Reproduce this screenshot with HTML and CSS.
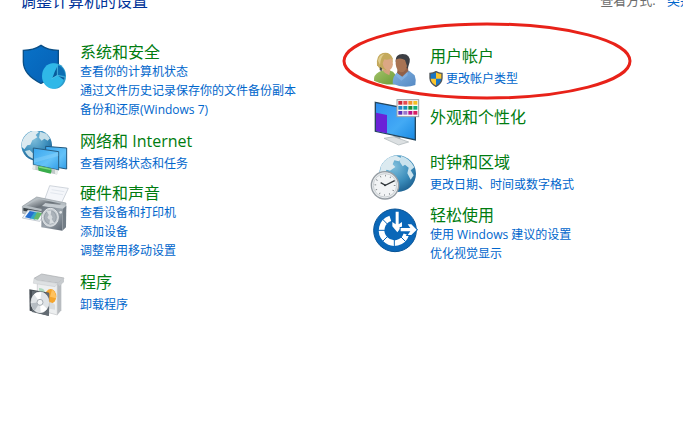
FILE: index.html
```
<!DOCTYPE html>
<html lang="zh-CN">
<head>
  <meta charset="UTF-8">
  <meta name="viewport" content="width=device-width, initial-scale=1.0">
  <title>控制面板</title>
  <link rel="stylesheet" href="styles.css">
</head>
<body>
  <header class="top-bar">
    <h1>调整计算机的设置</h1>
    <div class="view-by">查看方式: <a href="#">类别</a></div>
  </header>

  <main class="categories">
    <div class="column">
      <section class="category multi">
        <svg class="icon" viewBox="15 6 150 144" aria-hidden="true">
          <defs>
            <linearGradient id="shield-blue" x1="0" y1="0" x2="1" y2="1">
              <stop offset="0" stop-color="#0872c8"/>
              <stop offset="1" stop-color="#0660b4"/>
            </linearGradient>
          </defs>
          <path d="M25 31Q56 31 78 16Q99 31 130 31V72Q128 108 78 130Q26 105 25 66Z" fill="url(#shield-blue)" stroke="#0b4f86" stroke-width="4"/>
          <ellipse cx="120" cy="108" rx="33" ry="38" fill="#2d9ccc"/>
          <ellipse cx="114" cy="108" rx="33" ry="38" fill="#2fb8e8"/>
          <path d="M127 106V74Q150 82 151 108Z" fill="#0b6fb4"/>
          <path d="M127 106L112 115Q119 94 127 79ZM127 106L150 110L146 119Z" fill="#075b9c"/>
          <path d="M127 74V106L151 112M127 106L110 116" fill="none" stroke="#62cff0" stroke-width="2"/>
        </svg>
        <div class="text">
          <h2><a href="#">系统和安全</a></h2>
          <ul>
            <li><a href="#">查看你的计算机状态</a></li>
            <li><a href="#">通过文件历史记录保存你的文件备份副本</a></li>
            <li><a href="#">备份和还原(Windows 7)</a></li>
          </ul>
        </div>
      </section>

      <section class="category">
        <svg class="icon" viewBox="15 15 150 144" aria-hidden="true">
          <defs>
            <radialGradient id="globe" cx=".4" cy=".3" r=".75">
              <stop offset="0" stop-color="#7fbfdc"/>
              <stop offset=".6" stop-color="#3b8dbb"/>
              <stop offset="1" stop-color="#1c5f8f"/>
            </radialGradient>
            <linearGradient id="screen" x1="0" y1="0" x2="1" y2="1">
              <stop offset="0" stop-color="#3aa6ee"/>
              <stop offset=".6" stop-color="#64c2f8"/>
              <stop offset="1" stop-color="#2f9de8"/>
            </linearGradient>
          </defs>
          <circle cx="65" cy="58" r="46" fill="url(#globe)"/>
          <path d="M26 36Q40 16 62 13L72 18L62 27L67 34L52 43L46 56L37 58L28 70L20 62Q19 48 26 36Z" fill="#dceaf0"/>
          <path d="M75 17L94 23L105 37L98 44L88 38L80 44L72 35ZM30 75L44 72L54 82V98Q36 91 30 75Z" fill="#c5dfe9"/>
          <path d="M92 61L155 66V129L92 118Z" fill="url(#screen)" stroke="#21577d" stroke-width="3"/>
          <path d="M55 66L131 77V132L55 116Z" fill="url(#screen)" stroke="#285e82" stroke-width="3"/>
          <path d="M57 98L130 79V90L57 110Z" fill="#9adafd" opacity=".35"/>
          <path d="M54 123L127 139" stroke="#c0c9c8" stroke-width="14"/>
          <path d="M71 119L108 127Q112 135 107 143L71 134Q67 126 71 119Z" fill="#39ad4b"/>
          <path d="M72 123L107 130" stroke="#82d983" stroke-width="4"/>
          <path d="M53 117L61 119V131L53 129ZM120 131L128 133V145L120 143Z" fill="#e8ecea"/>
        </svg>
        <div class="text">
          <h2><a href="#">网络和 Internet</a></h2>
          <ul>
            <li><a href="#">查看网络状态和任务</a></li>
          </ul>
        </div>
      </section>

      <section class="category multi">
        <svg class="icon" viewBox="15 15 150 144" aria-hidden="true">
          <defs>
            <linearGradient id="printer-top" x1="0" y1="0" x2="1" y2="1">
              <stop offset="0" stop-color="#e1e6e9"/>
              <stop offset=".5" stop-color="#697178"/>
              <stop offset="1" stop-color="#b8bec2"/>
            </linearGradient>
            <linearGradient id="speaker" x1="0" y1="0" x2="1" y2="1">
              <stop offset="0" stop-color="#6a737d"/>
              <stop offset=".5" stop-color="#9ba4ac"/>
              <stop offset="1" stop-color="#5b6570"/>
            </linearGradient>
          </defs>
          <path d="M104 23L160 31L137 80L87 70Z" fill="#f4f6fa" stroke="#bbc3cc" stroke-width="2"/>
          <path d="M110 35L148 41M106 44L144 50" stroke="#e2e7ee" stroke-width="3"/>
          <path d="M22 85L65 57L153 75L151 103L118 125L23 106Z" fill="#b6bec3" stroke="#929aa0" stroke-width="2"/>
          <path d="M35 83L68 62L139 77L109 100Z" fill="url(#printer-top)"/>
          <path d="M25 89L87 101V111L25 98Z" fill="#3c4449"/>
          <path d="M39 96L91 104L74 130L22 120Z" fill="#f3f7fa" stroke="#aab4bc" stroke-width="2"/>
          <path d="M44 99L62 102L49 122L30 118Z" fill="#2770d0"/>
          <path d="M59 102L74 104L60 125L46 121Z" fill="#33a7c4"/>
          <path d="M66 103L82 105L69 125L56 123Z" fill="#66b76a"/>
          <path d="M80 85L91 75L154 83L145 92Z" fill="#c5ccd1"/>
          <path d="M80 85L144 92L142 158L79 148Z" fill="url(#speaker)"/>
          <path d="M144 92L154 83L153 148L142 158Z" fill="#737d86"/>
          <ellipse cx="106" cy="118" rx="24" ry="27" fill="#c9cfd4" stroke="#e3e7e9" stroke-width="3"/>
          <ellipse cx="106" cy="118" rx="18" ry="20" fill="#aab2b9" stroke="#858f98" stroke-width="2"/>
          <path d="M106 118L95 100L109 97ZM106 118L118 135L103 138Z" fill="#d8dde0"/>
          <circle cx="105" cy="118" r="7" fill="#d5dadd"/>
          <circle cx="137" cy="103" r="4" fill="#e1e5e7"/>
        </svg>
        <div class="text">
          <h2><a href="#">硬件和声音</a></h2>
          <ul>
            <li><a href="#">查看设备和打印机</a></li>
            <li><a href="#">添加设备</a></li>
            <li><a href="#">调整常用移动设置</a></li>
          </ul>
        </div>
      </section>

      <section class="category">
        <svg class="icon" viewBox="15 18 150 144" aria-hidden="true">
          <path d="M57 37L80 24L147 36L138 53L67 43Z" fill="#c9cccf" stroke="#a6a9ac" stroke-width="2"/>
          <path d="M67 43L127 52V147L67 131Z" fill="#edeff0" stroke="#c2c5c8" stroke-width="2"/>
          <path d="M127 52L139 41V133L127 147Z" fill="#b8bcc0"/>
          <path d="M57 37L67 43L128 52L120 62L55 52Z" fill="#dde0e2" stroke="#b6babd" stroke-width="1"/>
          <path d="M127 52L147 36V48L133 61Z" fill="#c7cbce"/>
          <path d="M72 66Q90 65 91 84L73 81Z" fill="#aed9bf"/>
          <ellipse cx="107" cy="91" rx="17" ry="22" fill="#f5a52d"/>
          <path d="M105 92L111 71Q124 79 123 97Z" fill="#ffc25f"/>
          <path d="M98 110Q110 105 120 116V131L96 127Z" fill="#d9dcde"/>
          <path d="M43 70L102 80L100 149L44 134Z" fill="#444b52"/>
          <path d="M51 74L103 82L102 150L51 138Z" fill="#646c73"/>
          <ellipse cx="75" cy="109" rx="27" ry="31" fill="#dfe3e6" stroke="#f6f7f8" stroke-width="2"/>
          <path d="M75 109L57 85Q66 77 79 79ZM75 109L96 128Q88 139 77 139Z" fill="#ffffff"/>
          <path d="M75 109L48 112Q50 127 59 134Z" fill="#b6bdc3"/>
          <circle cx="75" cy="109" r="9" fill="#f3f5f6" stroke="#a5acb2" stroke-width="3"/>
        </svg>
        <div class="text">
          <h2><a href="#">程序</a></h2>
          <ul>
            <li><a href="#">卸载程序</a></li>
          </ul>
        </div>
      </section>
    </div>

    <div class="column right">
      <section class="category">
        <svg class="icon" viewBox="15 18 150 144" aria-hidden="true">
          <defs>
            <linearGradient id="green-top" x1="0" y1="0" x2="1" y2="1">
              <stop offset="0" stop-color="#a4c46a"/>
              <stop offset="1" stop-color="#6b9a36"/>
            </linearGradient>
            <linearGradient id="blue-top" x1="0" y1="0" x2="1" y2="1">
              <stop offset="0" stop-color="#83b3e2"/>
              <stop offset="1" stop-color="#5589c3"/>
            </linearGradient>
          </defs>
          <path d="M27 122Q25 104 43 95L62 87L84 95Q98 107 92 133Q60 137 27 122Z" fill="url(#green-top)"/>
          <path d="M50 88L76 89L73 106L60 99Z" fill="#d5a17e"/>
          <path d="M36 76Q33 45 53 39Q76 34 83 55V66L70 91L45 87Z" fill="#c4a95c"/>
          <path d="M58 58Q72 61 79 54L84 73Q81 91 68 92Q55 86 53 70Z" fill="#dba784"/>
          <path d="M39 62Q42 44 58 42Q47 50 45 75Z" fill="#dfcc8d"/>
          <path d="M45 81L51 85L50 94L44 90Z" fill="#494d45"/>
          <path d="M83 131Q82 108 98 96L108 88L132 92L149 106Q154 118 151 135Q118 147 83 131Z" fill="url(#blue-top)"/>
          <path d="M98 85L129 79L130 97L113 111L96 100Z" fill="#916149"/>
          <path d="M92 65Q90 42 113 42Q137 43 134 66L128 86L119 80L109 60Z" fill="#3c3e44"/>
          <path d="M92 59Q106 51 120 60L126 78Q122 98 107 97Q94 91 92 72Z" fill="#a87353"/>
          <path d="M95 98L111 111L129 94L127 107L109 122L92 107Z" fill="#80afe0"/>
        </svg>
        <div class="text">
          <h2><a href="#">用户帐户</a></h2>
          <ul>
            <li>
              <a class="admin-link" href="#">
                <svg class="uac" viewBox="0 0 42 48" aria-hidden="true">
                  <path d="M3 7Q13 7 21 2Q29 7 39 7V22Q38 38 21 46Q4 38 3 22Z" fill="#1975c5"/>
                  <path d="M21 2Q29 7 39 7V23H21ZM3 23H21V46Q5 38 3 23Z" fill="#fbc52d"/>
                  <path d="M3 7Q13 7 21 2Q29 7 39 7V22Q38 38 21 46Q4 38 3 22Z" fill="none" stroke="#4f5459" stroke-width="4"/>
                </svg>更改帐户类型</a>
            </li>
          </ul>
        </div>
        <svg class="ring" viewBox="0 0 290 78" aria-hidden="true">
          <ellipse cx="145" cy="39" rx="143" ry="37" fill="none" stroke="#e82219" stroke-width="3"/>
        </svg>
      </section>

      <section class="category title-only">
        <svg class="icon" viewBox="15 18 150 144" aria-hidden="true">
          <defs>
            <linearGradient id="desktop" x1="0" y1="0" x2="1" y2="1">
              <stop offset="0" stop-color="#2c8df0"/>
              <stop offset=".6" stop-color="#43aaf5"/>
              <stop offset="1" stop-color="#1888e1"/>
            </linearGradient>
          </defs>
          <path d="M86 116L106 121V141H86Z" fill="#aab2b7"/>
          <path d="M57 136L87 131L131 147L101 156Z" fill="#dce0e2" stroke="#a8b0b4" stroke-width="2"/>
          <path d="M31 28L151 51V141L31 115Z" fill="url(#desktop)" stroke="#24465d" stroke-width="4"/>
          <path d="M33 59L66 66V121L33 114Z" fill="#6a22d7"/>
          <rect x="96" y="20" width="65" height="51" fill="#f8f8f8" stroke="#9ba0a4" stroke-width="3"/>
          <path d="M100 24H112V35H100Z" fill="#ca2439"/>
          <path d="M115 24H127V35H115Z" fill="#e84b50"/>
          <path d="M130 24H142V35H130Z" fill="#f3932d"/>
          <path d="M145 24H157V35H145Z" fill="#f6bf20"/>
          <path d="M100 39H112V50H100Z" fill="#2185c7"/>
          <path d="M115 39H127V50H115Z" fill="#1590ba"/>
          <path d="M130 39H142V50H130Z" fill="#218c36"/>
          <path d="M145 39H157V50H145Z" fill="#12ad78"/>
          <path d="M100 54H112V65H100Z" fill="#592fba"/>
          <path d="M115 54H127V65H115Z" fill="#9b75cc"/>
          <path d="M130 54H142V65H130Z" fill="#b9138a"/>
          <path d="M145 54H157V65H145Z" fill="#d82061"/>
        </svg>
        <div class="text">
          <h2><a href="#">外观和个性化</a></h2>
        </div>
      </section>

      <section class="category">
        <svg class="icon" viewBox="15 6 150 144" aria-hidden="true">
          <circle cx="98" cy="71" r="55" fill="url(#globe)"/>
          <path d="M48 48Q64 18 94 17L112 26L101 34L88 31L83 43L91 51L75 62L65 59L58 71L44 68Z" fill="#dbeaf0"/>
          <path d="M108 18Q137 27 148 52L137 61L146 76L137 89L127 70L131 53L120 44L113 49L104 35Z" fill="#c9e2ed"/>
          <circle cx="60" cy="106" r="41" fill="#e9ecee" stroke="#969da3" stroke-width="4"/>
          <circle cx="60" cy="106" r="35" fill="#f2f4f5" stroke="#cbd0d3" stroke-width="3"/>
          <circle cx="60" cy="106" r="29" fill="none" stroke="#686e73" stroke-width="5" stroke-dasharray="2 13.18"/>
          <path d="M47 98L61 106L89 92" fill="none" stroke="#32373b" stroke-width="4"/>
          <circle cx="60" cy="106" r="3" fill="#32373b"/>
        </svg>
        <div class="text">
          <h2><a href="#">时钟和区域</a></h2>
          <ul>
            <li><a href="#">更改日期、时间或数字格式</a></li>
          </ul>
        </div>
      </section>

      <section class="category multi">
        <svg class="icon" viewBox="15 6 150 144" aria-hidden="true">
          <circle cx="90" cy="82" r="64" fill="#0a67b8" stroke="#075396" stroke-width="3"/>
          <path d="M76 46A38 38 0 1 0 124 94" fill="none" stroke="#ffffff" stroke-width="17"/>
          <path d="M52 48L68 64M38 82H62M52 116L68 100M88 132V108M122 116L106 100" stroke="#0a67b8" stroke-width="3"/>
          <path d="M92 26H101V64L111 57V70L97 88L82 70V57L92 64Z" fill="#ffffff" stroke="#0a67b8" stroke-width="6" paint-order="stroke"/>
          <path d="M107 75H136L128 64H139L155 80L139 96H128L136 85H107Z" fill="#ffffff" stroke="#0a67b8" stroke-width="6" paint-order="stroke"/>
        </svg>
        <div class="text">
          <h2><a href="#">轻松使用</a></h2>
          <ul>
            <li><a href="#">使用 Windows 建议的设置</a></li>
            <li><a href="#">优化视觉显示</a></li>
          </ul>
        </div>
      </section>
    </div>
  </main>
</body>
</html>
```
FILE: styles.css
```
body {
  font-family: "Open Sans", "Noto Sans CJK SC", sans-serif;
  font-size: 12px;
  line-height: 19px;
  margin: 0;
  background: white;
  overflow: hidden;
}

a {
  color: #0066cc;
  text-decoration: none;
}

a:hover {
  text-decoration: underline;
}

/* heading row, scrolled partly out of view */
.top-bar {
  display: flex;
  justify-content: space-between;
  margin: -10px -10px 0 20px;
  height: 24px;
  white-space: nowrap;
}

.top-bar h1 {
  margin: 0;
  font-size: 16px;
  font-weight: normal;
  line-height: 22px;
  color: #003399;
}

.view-by {
  font-size: 13px;
  line-height: 20px;
  color: #6d6d6d;
}

.view-by a {
  margin-left: 8px;
}

.categories {
  display: grid;
  grid-template-columns: 1fr 1fr;
  column-gap: 37px;
  padding: 28px 0 0 20px;
}

.right {
  padding-top: 4px;
}

.category {
  display: flex;
  gap: 10px;
  margin-bottom: 4px;
  position: relative;
}

.multi {
  margin-bottom: 12px;
}

.right .category {
  margin-bottom: 5px;
}

.icon {
  width: 50px;
  height: 48px;
  flex: none;
}

.text {
  white-space: nowrap;
}

.category h2 {
  margin: 0 0 3px;
  font-size: 16px;
  font-weight: normal;
  line-height: 20px;
}

.multi h2 {
  margin-bottom: 0;
}

.category h2 a {
  color: #007c10;
}

.title-only .text {
  padding-top: 8px;
}

.category ul {
  list-style: none;
  margin: 0;
  padding: 0;
}

.admin-link {
  display: flex;
  align-items: center;
  gap: 3px;
}

.uac {
  width: 14px;
  height: 16px;
  margin-left: -1px;
}

.ring {
  position: absolute;
  left: -28px;
  top: -24px;
  width: 290px;
  height: 78px;
  pointer-events: none;
}
```
